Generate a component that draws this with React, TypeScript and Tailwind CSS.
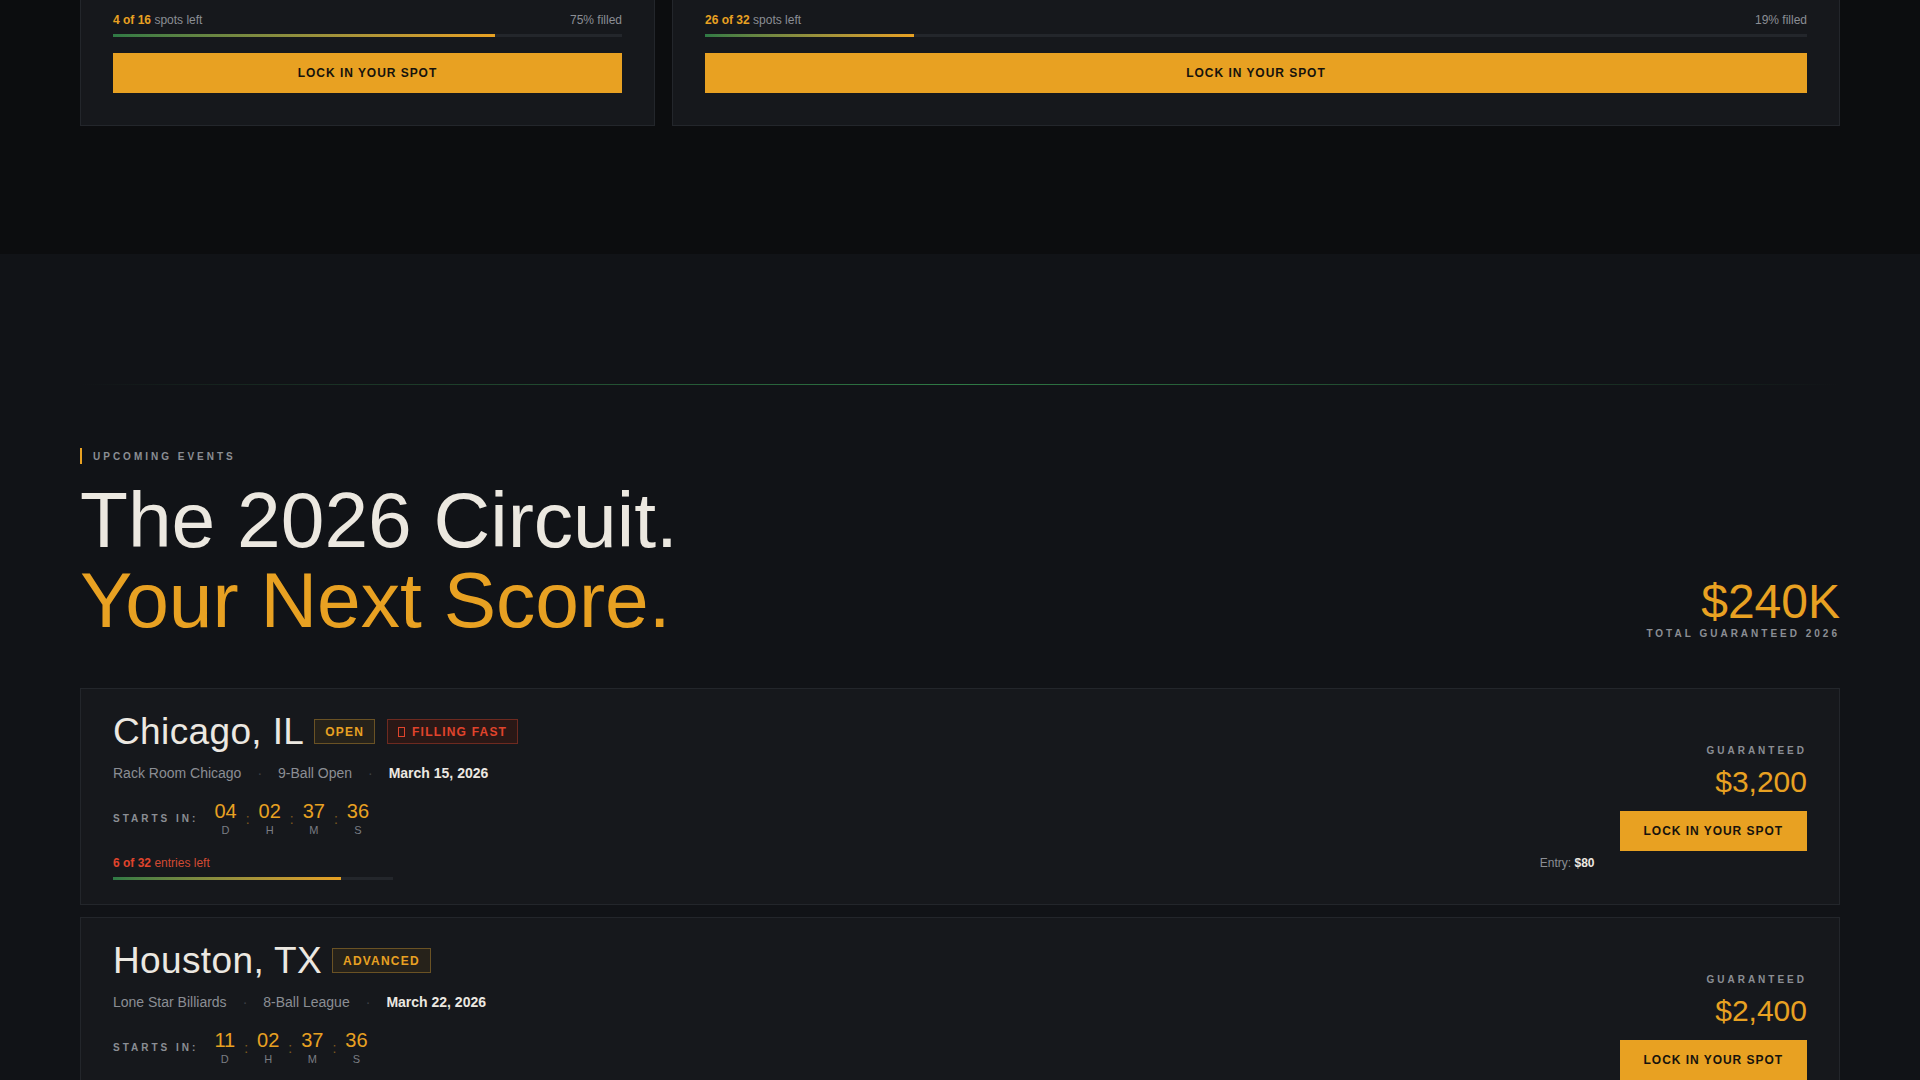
import React from "react";

type Spots = { left: number; total: number; pct: number };

const topCards: Spots[] = [
  { left: 4, total: 16, pct: 75 },
  { left: 26, total: 32, pct: 19 },
];

type EventItem = {
  city: string;
  badges: { label: string; tone: "gold" | "red"; icon?: boolean }[];
  venue: string;
  format: string;
  date: string;
  countdown: [string, string, string, string];
  left: number;
  total: number;
  hot: boolean;
  prize: string;
  entry: string;
};

const events: EventItem[] = [
  {
    city: "Chicago, IL",
    badges: [
      { label: "OPEN", tone: "gold" },
      { label: "FILLING FAST", tone: "red", icon: true },
    ],
    venue: "Rack Room Chicago",
    format: "9-Ball Open",
    date: "March 15, 2026",
    countdown: ["04", "02", "37", "36"],
    left: 6,
    total: 32,
    hot: true,
    prize: "$3,200",
    entry: "$80",
  },
  {
    city: "Houston, TX",
    badges: [{ label: "ADVANCED", tone: "gold" }],
    venue: "Lone Star Billiards",
    format: "8-Ball League",
    date: "March 22, 2026",
    countdown: ["11", "02", "37", "36"],
    left: 14,
    total: 32,
    hot: false,
    prize: "$2,400",
    entry: "$60",
  },
];

function LockButton({ full }: { full?: boolean }) {
  return (
    <button
      className={
        full
          ? "h-10 w-full bg-[#e8a122] text-xs font-bold tracking-[0.08em] text-[#16130d]"
          : "h-10 px-6 bg-[#e8a122] text-xs font-bold tracking-[0.08em] text-[#16130d]"
      }
    >
      LOCK IN YOUR SPOT
    </button>
  );
}

function SpotsCard({ left, total, pct }: Spots) {
  return (
    <div className="border border-t-0 border-[#23262b] bg-[#16181c] px-8 pt-3 pb-8">
      <div className="flex justify-between text-xs leading-4 text-[#8b8e94]">
        <span>
          <b className="font-bold text-[#e8a122]">
            {left} of {total}
          </b>{" "}
          spots left
        </span>
        <span>{pct}% filled</span>
      </div>
      <div className="mt-1.5 h-[3px] bg-[#23262b]">
        <div className="h-full bg-linear-to-r from-[#2f7a45] to-[#e8a122]" style={{ width: `${pct}%` }} />
      </div>
      <div className="mt-4">
        <LockButton full />
      </div>
    </div>
  );
}

function Badge({ label, tone, icon }: { label: string; tone: "gold" | "red"; icon?: boolean }) {
  return (
    <span
      className={
        tone === "gold"
          ? "inline-flex h-[25px] items-center border border-[#6a5224] bg-[#26221a] px-2.5 text-xs font-bold tracking-[0.1em] text-[#e8a122]"
          : "inline-flex h-[25px] items-center border border-[#6e2a20] bg-[#2a1816] px-2.5 text-xs font-bold tracking-[0.1em] text-[#e0442c]"
      }
    >
      {icon && <span className="mr-[7px] inline-block h-[10px] w-[7px] border border-current" />}
      {label}
    </span>
  );
}

function EventCard({ ev }: { ev: EventItem }) {
  const units = ["D", "H", "M", "S"];
  const filled = ((ev.total - ev.left) / ev.total) * 100;
  return (
    <div className="flex border border-[#23262b] bg-[#16181c] px-8 py-6">
      <div className="flex-1">
        <div className="flex items-center gap-[10px]">
          <h3 className="text-[37px] leading-[37px] tracking-[0.01em] text-[#ece8e1]">{ev.city}</h3>
          <div className="flex items-center gap-3">
            {ev.badges.map((b) => (
              <Badge key={b.label} label={b.label} tone={b.tone} icon={b.icon} />
            ))}
          </div>
        </div>

        <div className="mt-[13px] flex items-center gap-4 text-sm leading-5 text-[#8b8e94]">
          <span>{ev.venue}</span>
          <span className="text-[#3d4046]">·</span>
          <span>{ev.format}</span>
          <span className="text-[#3d4046]">·</span>
          <span className="font-bold text-[#ece8e1]">{ev.date}</span>
        </div>

        <div className="mt-[18px] flex items-center gap-4">
          <span className="text-[10px] font-bold tracking-[0.3em] text-[#8b8e94]">STARTS IN:</span>
          <div className="flex items-center gap-[9px]">
            {ev.countdown.map((n, i) => (
              <React.Fragment key={units[i]}>
                {i > 0 && <span className="text-sm leading-none text-[#e8a122]/50">:</span>}
                <div className="flex flex-col items-center">
                  <span className="text-xl leading-none text-[#e8a122]">{n}</span>
                  <span className="mt-1 text-[11px] leading-none text-[#7a7d83]">{units[i]}</span>
                </div>
              </React.Fragment>
            ))}
          </div>
        </div>

        <div className="mt-[19px] text-xs leading-4">
          {ev.hot ? (
            <span className="text-[#d24a33]">
              <b className="font-bold text-[#e0442c]">
                {ev.left} of {ev.total}
              </b>{" "}
              entries left
            </span>
          ) : (
            <span className="text-[#8b8e94]">
              <b className="font-bold text-[#e8a122]">
                {ev.left} of {ev.total}
              </b>{" "}
              entries left
            </span>
          )}
        </div>
        <div className="mt-1.5 h-[3px] w-[280px] bg-[#23262b]">
          <div className="h-full bg-linear-to-r from-[#2f7a45] to-[#e8a122]" style={{ width: `${filled}%` }} />
        </div>
      </div>

      <div className="mb-[9px] self-end text-xs leading-4 text-[#8b8e94]">
        Entry: <b className="font-bold text-[#ece8e1]">{ev.entry}</b>
      </div>

      <div className="ml-[25px] mt-1 flex flex-col items-end self-center">
        <span className="text-[10px] font-bold leading-none tracking-[0.3em] text-[#8b8e94]">GUARANTEED</span>
        <span className="mt-[11px] text-3xl leading-none text-[#e8a122]">{ev.prize}</span>
        <div className="mt-[14px]">
          <LockButton />
        </div>
      </div>
    </div>
  );
}

export default function App() {
  return (
    <div className="min-h-screen bg-[#111317] font-['Liberation_Sans',Arial,sans-serif]">
      <section className="bg-[#0c0d0f] px-20 pb-32">
        <div className="grid grid-cols-[575px_1fr] gap-[17px]">
          {topCards.map((c) => (
            <SpotsCard key={c.total + "-" + c.left} {...c} />
          ))}
        </div>
      </section>

      <section className="px-20 pt-[130px] pb-24">
        <div className="h-px bg-linear-to-r from-transparent via-[#2f7a45] to-transparent" />

        <div className="mt-[63px] flex items-center gap-[11px]">
          <span className="h-4 w-0.5 bg-[#e8a122]" />
          <span className="text-[10px] font-bold tracking-[0.3em] text-[#8b8e94]">UPCOMING EVENTS</span>
        </div>

        <div className="mt-4 flex items-end justify-between">
          <h2 className="text-[78.5px] font-normal leading-[80px]">
            <span className="block text-[#ece8e0]">The 2026 Circuit.</span>
            <span className="block text-[#e8a122]">Your Next Score.</span>
          </h2>
          <div className="mb-[1px] flex flex-col items-end">
            <span className="text-5xl leading-none text-[#e8a122]">$240K</span>
            <span className="mt-[3px] text-[10px] font-bold leading-none tracking-[0.3em] text-[#8b8e94]">
              TOTAL GUARANTEED 2026
            </span>
          </div>
        </div>

        <div className="mt-12 flex flex-col gap-3">
          {events.map((ev) => (
            <EventCard key={ev.city} ev={ev} />
          ))}
        </div>
      </section>
    </div>
  );
}
